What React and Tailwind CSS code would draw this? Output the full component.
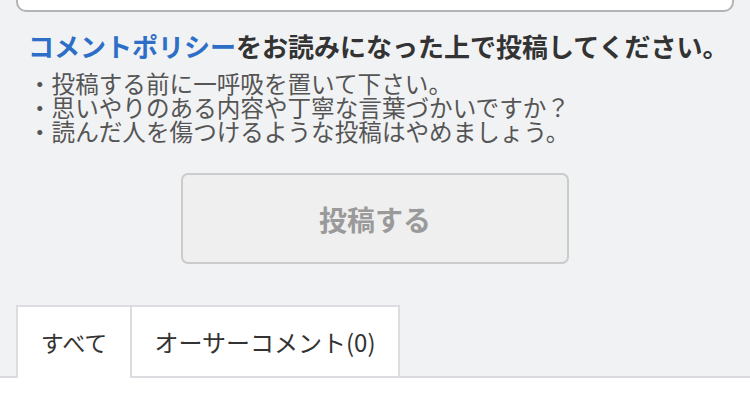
export default function App() {
  const jp = { fontFamily: '"Noto Sans CJK JP", "Noto Sans", sans-serif' };
  return (
    <div className="w-[750px] h-[402px] overflow-hidden bg-[#f1f2f4]" style={jp}>
      <div className="px-[16px]">
        <div className="h-[12px] border-x-2 border-b-2 border-[#b4b4b4] rounded-b-[10px] bg-white" />
      </div>
      <div className="px-[28px]">
        <p className="mt-[16px] text-[26px] leading-[36px] font-bold text-[#333333] whitespace-nowrap">
          <span className="text-[#2d6ec6]">コメントポリシー</span>をお読みになった上で投稿してください。
        </p>
        <ul className="mt-[7px] text-[23.6px] leading-[24px] text-[#555555] whitespace-nowrap">
          <li>・投稿する前に一呼吸を置いて下さい。</li>
          <li>・思いやりのある内容や丁寧な言葉づかいですか？</li>
          <li>・読んだ人を傷つけるような投稿はやめましょう。</li>
        </ul>
      </div>
      <div className="flex justify-center mt-[30px]">
        <button className="w-[388px] h-[91px] rounded-[7px] border-2 border-[#cbcbcb] bg-[#efefef] text-[28px] font-bold text-[#9a9a9a]">
          投稿する
        </button>
      </div>
      <div className="mt-[41px] flex pl-[16px] border-b-2 border-[#d9dadd]">
        <div className="w-[116px] h-[73px] -mb-[2px] border-2 border-b-0 border-[#dcdde0] bg-white flex items-center justify-center text-[23px] text-[#333333]">
          すべて
        </div>
        <div className="w-[268px] h-[73px] -mb-[2px] border-2 border-l-0 border-[#dcdde0] bg-white flex items-center justify-center text-[24px] text-[#333333]">
          オーサーコメント(0)
        </div>
      </div>
      <div className="bg-white h-[40px] pt-[24px] pl-[264px]">
        <div className="w-[130px] h-[20px] border-2 border-[#dddddd] rounded-[6px]" />
      </div>
    </div>
  );
}
